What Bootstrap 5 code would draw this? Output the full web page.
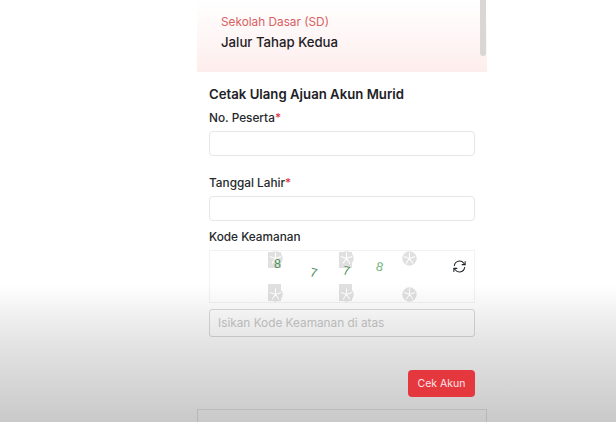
<!DOCTYPE html>
<html lang="id">
<head>
<meta charset="utf-8">
<title>Cetak Ulang Ajuan Akun Murid</title>
<link href="https://cdn.jsdelivr.net/npm/bootstrap@5.3.0/dist/css/bootstrap.min.css" rel="stylesheet">
<style>
html,body{height:422px;overflow:hidden;background:#fff}
body{font-family:Inter,"Liberation Sans",sans-serif;color:#212529;position:relative}
.panel-wrap{width:290px;margin-left:197px;height:422px;overflow:hidden;position:relative}
.hero{height:72px;background:linear-gradient(180deg,#fff 0%,#fdeeed 100%);padding:14px 24px 0;box-sizing:border-box}
.hero-sub{font-size:11.8px;line-height:16px;color:#d9605f}
.hero-main{font-size:13.2px;line-height:19px;font-weight:500;color:#1d2125;margin-top:3px}
.scroll-thumb{position:absolute;left:283px;top:0;width:6px;height:56px;background:#d9d6d6;border-radius:0 0 3px 3px}
.form-area{padding:14px 12px 0}
.form-title{font-size:13.2px;line-height:17px;font-weight:600;margin:0 0 7px;color:#1d2125}
.lbl{display:block;font-size:11.8px;line-height:16px;font-weight:500;margin:0 0 5px;color:#26292c}
.req{color:#dc3545}
.fld{height:25px;border-radius:4px;border:1px solid #e4e6e9;background:#fff;font-size:12px;padding:0 9px;box-shadow:none}
.gap-a{margin-bottom:19px}
.gap-b{margin-bottom:7px}
.lbl-last{margin-top:8px;margin-bottom:6px}
.captcha{height:53px;border:1px solid #f2f2f2;position:relative;margin-bottom:6px;margin-top:-1px}
.tile{position:absolute;width:15px;height:20px}
.dg{position:absolute;font-family:"Liberation Sans",sans-serif;font-size:12.5px;line-height:12px;color:#4c8f58}
.dg-pale{color:#6fb47a}
.refresh{position:absolute;left:242px;top:8px;width:15px;height:15px}
.fld-alt{height:28px;background:#fff;border:1px solid #dadada;font-size:11.8px;padding:0 8px;border-radius:3px}
.fld-alt::placeholder{color:#c8c8c8;opacity:1}
.act{margin-top:33px}
.btn-cek{background:#e5383e;border:0;color:#fbe4e4;font-size:10.5px;line-height:14px;padding:0;width:67px;height:27px;border-radius:4px;position:relative;z-index:6}
.btn-cek:hover{background:#e5383e;color:#fbe4e4}
.foot-box{position:absolute;left:0;right:0;top:409px;height:40px;border:1px solid #e6e6e6;background:#fff}
.shade{position:absolute;left:0;right:0;top:284px;height:138px;pointer-events:none;background:linear-gradient(180deg,rgba(0,0,0,0) 0%,rgba(0,0,0,.1) 40%,rgba(0,0,0,.21) 100%);z-index:5}
</style>
</head>
<body>
<svg width="0" height="0" class="d-block" aria-hidden="true"><defs>
<g id="wheel"><circle cx="7.5" cy="7.5" r="7.2" fill="#e0e0e0"/><path d="M7.500 7.500V1.500M7.500 7.500L13 5.600M7.500 7.500L11 12.500M7.500 7.500L4 12.500M7.500 7.500L2 5.600" stroke="#fff" stroke-width="1.1" fill="none"/></g>
</defs></svg>
<main class="panel-wrap">
<section class="hero">
<div class="hero-sub">Sekolah Dasar (SD)</div>
<div class="hero-main">Jalur Tahap Kedua</div>
</section>
<div class="scroll-thumb"></div>
<form class="form-area">
<h1 class="form-title">Cetak Ulang Ajuan Akun Murid</h1>
<label class="lbl" for="a">No. Peserta<span class="req">*</span></label>
<input id="a" class="form-control fld gap-a" type="text">
<label class="lbl" for="b">Tanggal Lahir<span class="req">*</span></label>
<input id="b" class="form-control fld gap-b" type="text">
<label class="lbl lbl-last" for="c">Kode Keamanan</label>
<div class="captcha">
<svg class="tile" style="left:58px;top:0" viewBox="0 0 15 20"><rect width="13" height="16" y="1" fill="#e0e0e0"/><use href="#wheel" y="0"/></svg>
<svg class="tile" style="left:129px;top:0" viewBox="0 0 15 20"><rect width="13" height="16" y="1" fill="#e0e0e0"/><use href="#wheel" y="0"/></svg>
<svg class="tile" style="left:192px;top:0" viewBox="0 0 15 20"><use href="#wheel" y="0"/></svg>
<svg class="tile" style="left:58px;top:33px" viewBox="0 0 15 20"><rect width="13" height="17" y="0" fill="#e0e0e0"/><use href="#wheel" y="3"/></svg>
<svg class="tile" style="left:129px;top:33px" viewBox="0 0 15 20"><rect width="13" height="17" y="0" fill="#e0e0e0"/><use href="#wheel" y="3"/></svg>
<svg class="tile" style="left:192px;top:33px" viewBox="0 0 15 20"><use href="#wheel" y="3"/></svg>
<span class="dg" style="left:64px;top:7px">8</span>
<span class="dg" style="left:100px;top:16px;transform:rotate(14deg)">7</span>
<span class="dg" style="left:133px;top:14px;transform:rotate(10deg)">7</span>
<span class="dg dg-pale" style="left:166px;top:10px;transform:rotate(14deg)">8</span>
<svg class="refresh" viewBox="0 0 16 16" fill="none" stroke="#212529" stroke-width="1.1" stroke-linecap="round" stroke-linejoin="round"><path d="M2.500 7A5.600 5.600 0 0 1 12.600 4.500L13.800 6"/><path d="M14 2.800V6H10.800"/><path d="M13.500 9A5.600 5.600 0 0 1 3.400 11.500L2.200 10"/><path d="M2 13.200V10H5.200"/></svg>
</div>
<input class="form-control fld-alt" type="text" placeholder="Isikan Kode Keamanan di atas">
<div class="act d-flex justify-content-end"><button type="button" class="btn btn-cek">Cek Akun</button></div>
</form>
<div class="foot-box"></div>
</main>
<div class="shade"></div>
<script src="https://cdn.jsdelivr.net/npm/bootstrap@5.3.0/dist/js/bootstrap.bundle.min.js"></script>
</body>
</html>
